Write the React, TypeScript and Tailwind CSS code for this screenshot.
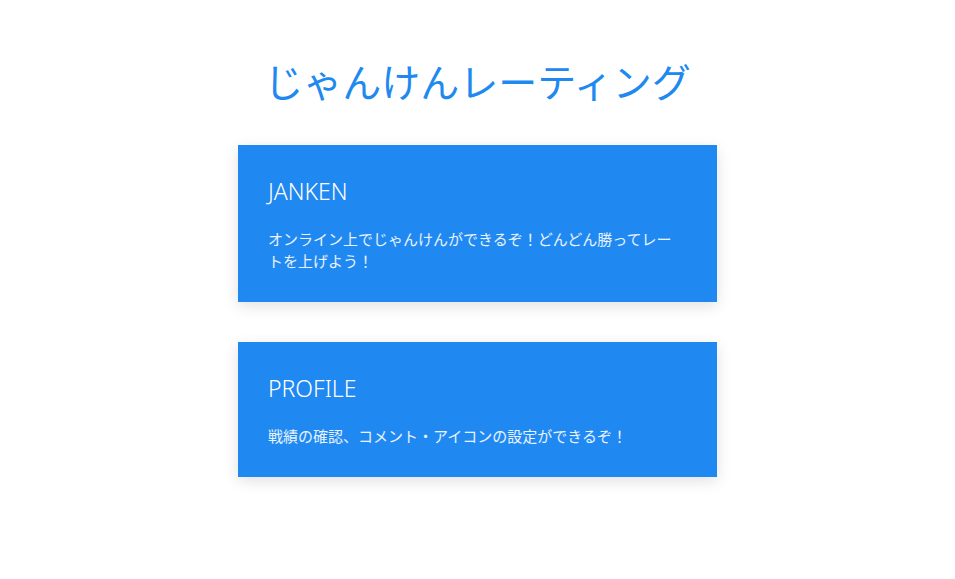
const cards = [
  {
    title: 'JANKEN',
    body: 'オンライン上でじゃんけんができるぞ！どんどん勝ってレートを上げよう！',
  },
  {
    title: 'PROFILE',
    body: '戦績の確認、コメント・アイコンの設定ができるぞ！',
  },
];

export default function App() {
  return (
    <div
      className="min-h-screen bg-white flex flex-col items-center pt-[56px]"
      style={{ fontFamily: '"Noto Sans", "Noto Sans CJK JP", sans-serif' }}
    >
      <h1 className="text-[39px] leading-[52px] font-normal text-[#2089f0] mb-[37px]">
        じゃんけんレーティング
      </h1>

      <div className="flex flex-col gap-[40px]">
        {cards.map((c) => (
          <div
            key={c.title}
            className="w-[479px] bg-[#1f88f1] p-[30px] shadow-[0_4px_14px_rgba(0,0,0,0.12)]"
          >
            <h2 className="text-[23px] leading-[33px] font-light text-white mb-[20px]">{c.title}</h2>
            <p className="max-w-[408px] text-[15px] leading-[22px] text-white/90">{c.body}</p>
          </div>
        ))}
      </div>
    </div>
  );
}
